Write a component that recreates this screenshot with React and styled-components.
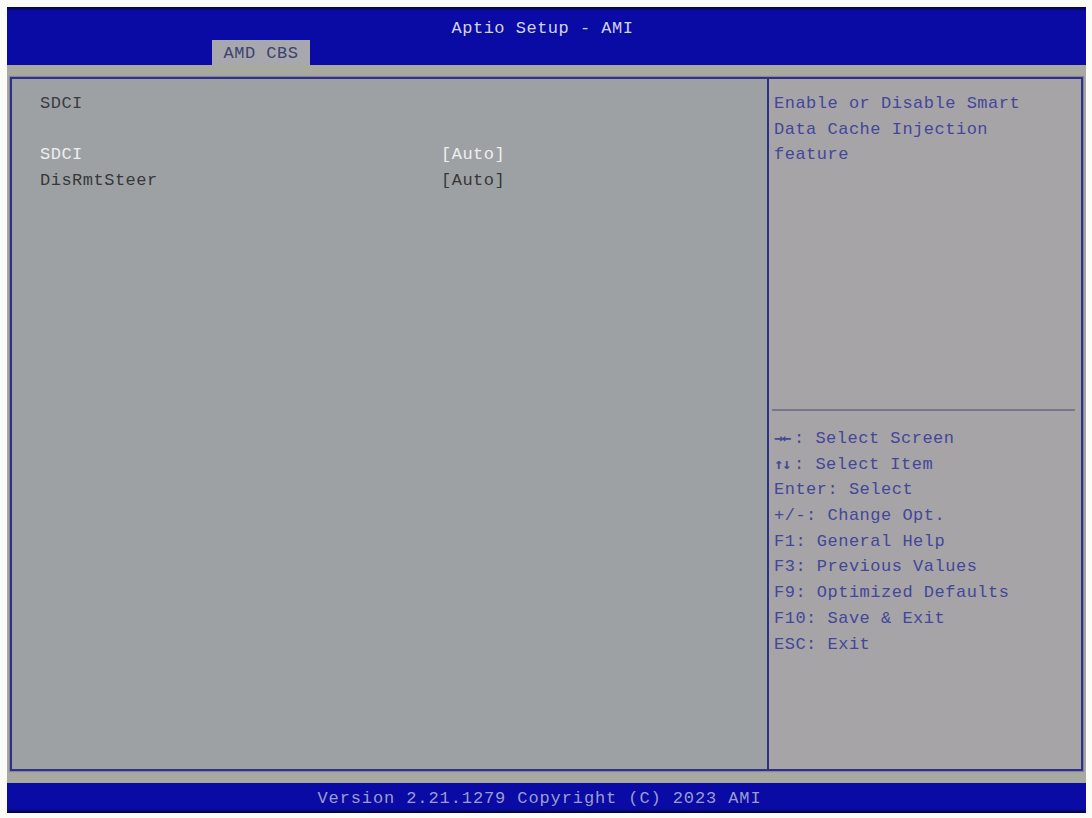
import React from 'react';
import styled, { createGlobalStyle } from 'styled-components';

const GlobalStyle = createGlobalStyle`
    html, body {
        margin: 0;
        padding: 0;
        background: #fbfbf8;
    }
    body {
        font-family: "Liberation Mono", "DejaVu Sans Mono", monospace;
        font-size: 17px;
        letter-spacing: 0.5px;
    }
`;

const Screen = styled.div`
    margin: 7px 0 0 7px;
    width: 1079px;
    height: 806px;
    display: flex;
    flex-direction: column;
    background: #a9aa9f;
`;

const Header = styled.header`
    height: 58px;
    flex: none;
    display: flex;
    flex-direction: column;
    background: linear-gradient(to bottom, #05053a 0px, #0a0aa4 4px, #0a0aa4 100%);
`;

const Title = styled.div`
    text-align: center;
    color: #d2d3ea;
    line-height: 20px;
    padding-top: 12px;
    padding-right: 8px;
`;

const TabRow = styled.div`
    margin-top: auto;
    display: flex;
    padding-left: 205px;
`;

const Tab = styled.div`
    width: 98px;
    height: 25px;
    line-height: 28px;
    text-align: center;
    background: #a6a8ae;
    color: #3f416e;
`;

const Body = styled.main`
    flex: 1;
    display: flex;
    padding: 12px 3px 12px 3px;
    min-height: 0;
`;

const Frame = styled.div`
    flex: 1;
    display: grid;
    grid-template-columns: 757px 1fr;
    border: 2px solid #2e2f86;
    box-shadow: 0 0 1px 1px rgba(90, 90, 170, 0.45);
    background: #9ea1a3;
`;

const Main = styled.section`
    padding: 12px 0 0 28px;
    color: #3a3c40;
    border-right: 2px solid #2e2f86;
    box-shadow: 1px 0 1px rgba(90, 90, 170, 0.5);
`;

const Line = styled.div`
    height: 25.7px;
    line-height: 25.7px;
    white-space: pre;
`;

const Item = styled.div`
    display: grid;
    grid-template-columns: 401px 1fr;
    height: 25.7px;
    line-height: 25.7px;
    color: ${({ selected }) => (selected ? '#eceef2' : '#36383c')};
`;

const Side = styled.aside`
    display: flex;
    flex-direction: column;
    background: #a6a4a6;
    color: #44469a;
`;

const HelpText = styled.div`
    height: 318px;
    padding: 12px 0 0 5px;
    line-height: 25.7px;
`;

const Divider = styled.hr`
    margin: 0 6px 0 3px;
    border: none;
    height: 2px;
    background: #76788a;
`;

const Keys = styled.div`
    padding: 15px 0 0 5px;
`;

/* key glyphs: two arrows squeezed into two cells */
const Arrows = styled.span`
    display: inline-block;
    width: 20px;
    font-family: "DejaVu Sans Mono", monospace;
    font-size: 15px;
    font-weight: bold;
    letter-spacing: -1px;
`;

const Footer = styled.footer`
    height: 30px;
    flex: none;
    display: flex;
    align-items: center;
    justify-content: center;
    padding-right: 14px;
    background: linear-gradient(to bottom, #0a0aa4 0px, #0a0aa4 26px, #04042a 100%);
    color: #9b9dcf;
    letter-spacing: 0.9px;
`;

const keys = [
    'Enter: Select',
    '+/-: Change Opt.',
    'F1: General Help',
    'F3: Previous Values',
    'F9: Optimized Defaults',
    'F10: Save & Exit',
    'ESC: Exit',
];

const App = () => (
    <>
        <GlobalStyle />
        <Screen>
            <Header>
                <Title>Aptio Setup - AMI</Title>
                <TabRow>
                    <Tab>AMD CBS</Tab>
                </TabRow>
            </Header>
            <Body>
                <Frame>
                    <Main>
                        <Line>SDCI</Line>
                        <Line> </Line>
                        <Item selected>
                            <span>SDCI</span>
                            <span>[Auto]</span>
                        </Item>
                        <Item>
                            <span>DisRmtSteer</span>
                            <span>[Auto]</span>
                        </Item>
                    </Main>
                    <Side>
                        <HelpText>
                            Enable or Disable Smart
                            <br />
                            Data Cache Injection
                            <br />
                            feature
                        </HelpText>
                        <Divider />
                        <Keys>
                            <Line>
                                <Arrows>→←</Arrows>: Select Screen
                            </Line>
                            <Line>
                                <Arrows>↑↓</Arrows>: Select Item
                            </Line>
                            {keys.map((k) => (
                                <Line key={k}>{k}</Line>
                            ))}
                        </Keys>
                    </Side>
                </Frame>
            </Body>
            <Footer>Version 2.21.1279 Copyright (C) 2023 AMI</Footer>
        </Screen>
    </>
);

export default App;
